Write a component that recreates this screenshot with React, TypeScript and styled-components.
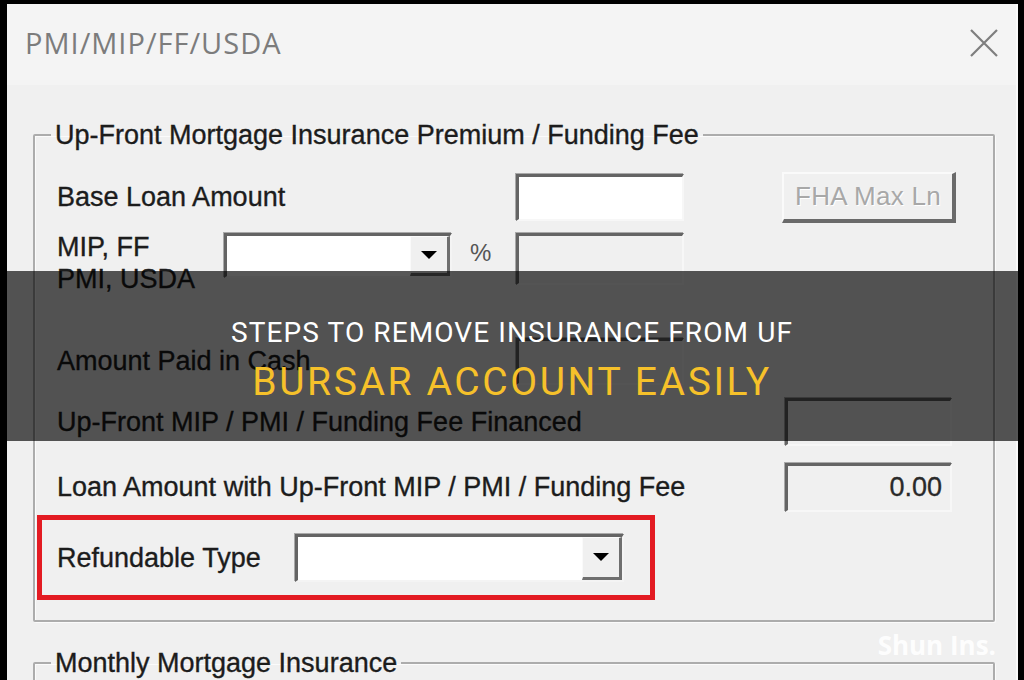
import React from "react";
import styled, { createGlobalStyle } from "styled-components";

const GlobalStyle = createGlobalStyle`
  html, body { margin: 0; padding: 0; background: #000; }
  #root { width: 1024px; height: 680px; }
  * { box-sizing: border-box; }
`;

const Screen = styled.div`
  position: relative;
  width: 1024px;
  height: 680px;
  overflow: hidden;
  background: #000;
  padding: 4px 6px 0 7px;
`;

const Dialog = styled.div`
  height: 100%;
  display: flex;
  flex-direction: column;
  background: #f0f0f0;
  border-right: 2px solid #fafafa;
  font-family: "Liberation Sans", Arial, sans-serif;
  color: #1c1c1c;
`;

const TitleBar = styled.div`
  flex: none;
  height: 81px;
  display: flex;
  align-items: center;
  justify-content: space-between;
  padding: 0 17px 4px 18px;
  background: #f4f4f4;
`;

const Title = styled.span`
  font-family: "Open Sans", "Noto Sans", sans-serif;
  font-size: 29px;
  color: #7c7c7c;
  letter-spacing: 1px;
`;

const Body = styled.div`
  flex: 1;
  display: flex;
  flex-direction: column;
  padding: 35px 21px 0 26px;
`;

const Group = styled.fieldset<{ $mt?: number; $h?: number }>`
  margin: ${(p) => p.$mt ?? 0}px 0 0 0;
  padding: 0;
  min-width: 0;
  flex: none;
  ${(p) => (p.$h ? `height: ${p.$h}px;` : "")}
  border: 2px solid #acacac;
  border-radius: 2px;
  box-shadow: inset 1px 1px 0 #fbfbfb, 1px 1px 0 #fbfbfb;
`;

const Legend = styled.legend`
  margin-left: 16px;
  padding: 0 4px;
  font-size: 27px;
  line-height: 30px;
  letter-spacing: 0;
  color: #1c1c1c;
  -webkit-text-stroke: 0.35px #1c1c1c;
`;

const GroupContent = styled.div`
  display: flex;
  flex-direction: column;
  padding: 20px 0 20px 22px;
`;

const Row = styled.div<{ $h: number; $mt?: number; $align?: string }>`
  display: flex;
  align-items: ${(p) => p.$align ?? "center"};
  height: ${(p) => p.$h}px;
  margin-top: ${(p) => p.$mt ?? 0}px;
`;

const Label = styled.span<{ $w: number; $mt?: number }>`
  flex: none;
  width: ${(p) => p.$w}px;
  margin-top: ${(p) => p.$mt ?? 0}px;
  font-size: 27px;
  line-height: 32px;
  letter-spacing: 0;
  white-space: nowrap;
  -webkit-text-stroke: 0.35px #1c1c1c;
`;

const Field = styled.div<{ $w: number; $h: number; $disabled?: boolean; $mt?: number; $ml?: number }>`
  flex: none;
  width: ${(p) => p.$w}px;
  height: ${(p) => p.$h}px;
  margin-top: ${(p) => p.$mt ?? 0}px;
  margin-left: ${(p) => p.$ml ?? 0}px;
  display: flex;
  align-items: center;
  justify-content: flex-end;
  padding-right: 8px;
  background: ${(p) => (p.$disabled ? "#f0f0f0" : "#ffffff")};
  border-top: 3px solid #646464;
  border-left: 3px solid #646464;
  border-right: 2px solid #f7f7f7;
  border-bottom: 2px solid #f7f7f7;
  box-shadow: -1px -1px 0 #a9a9a9;
  font-size: 27px;
  color: #2a2a2a;
  -webkit-text-stroke: 0.3px #2a2a2a;
`;

const Combo = styled.div<{ $w: number; $h: number; $mt?: number }>`
  flex: none;
  width: ${(p) => p.$w}px;
  height: ${(p) => p.$h}px;
  margin-top: ${(p) => p.$mt ?? 0}px;
  display: flex;
  justify-content: flex-end;
  background: #ffffff;
  border-top: 3px solid #646464;
  border-left: 3px solid #646464;
  border-right: 2px solid #f4f4f4;
  border-bottom: 2px solid #f4f4f4;
  box-shadow: -1px -1px 0 #a9a9a9;
`;

const DropButton = styled.div`
  width: 40px;
  height: 100%;
  display: flex;
  align-items: center;
  justify-content: center;
  background: #f0f0f0;
  border-right: 3px solid #6f6f6f;
  border-bottom: 3px solid #6f6f6f;
  border-top: 1px solid #fafafa;
  border-left: 1px solid #fafafa;
`;

const Percent = styled.span`
  flex: none;
  width: 64px;
  padding-left: 18px;
  margin-top: 9px;
  font-size: 24px;
  color: #555;
`;

const Button = styled.div`
  flex: none;
  width: 174px;
  height: 51px;
  margin-left: 98px;
  display: flex;
  align-items: center;
  justify-content: center;
  background: #f0f0f0;
  border-top: 2px solid #fafafa;
  border-left: 2px solid #fafafa;
  border-right: 4px solid #6a6a6a;
  border-bottom: 4px solid #6a6a6a;
  font-size: 26px;
  letter-spacing: 0.3px;
  color: #a8a8a8;
  text-shadow: 1px 1px 0 #ffffff;
`;

const RedBox = styled.div`
  flex: none;
  width: 618px;
  height: 85px;
  margin: 2px 0 0 -20px;
  display: flex;
  align-items: center;
  padding-left: 15px;
  border: 5px solid #e31b22;
`;

const Overlay = styled.div`
  position: absolute;
  left: 0;
  right: 0;
  top: 271px;
  height: 170px;
  display: flex;
  flex-direction: column;
  align-items: center;
  padding-top: 43px;
  gap: 6px;
  background: rgba(0, 0, 0, 0.66);
  font-family: Roboto, "Liberation Sans", sans-serif;
  text-align: center;
`;

const HeadLine = styled.span<{ $accent?: boolean }>`
  font-size: ${(p) => (p.$accent ? 39 : 28)}px;
  line-height: ${(p) => (p.$accent ? 48 : 38)}px;
  letter-spacing: ${(p) => (p.$accent ? 2.6 : 1.1)}px;
  color: ${(p) => (p.$accent ? "#f6c12a" : "#ffffff")};
  white-space: nowrap;
`;

const Watermark = styled.span`
  position: absolute;
  right: 28px;
  top: 627px;
  font-family: "Open Sans", "Noto Sans", sans-serif;
  font-weight: 700;
  font-size: 26px;
  color: rgba(255, 255, 255, 0.92);
`;

const CloseIcon = () => (
  <svg width="30" height="30" viewBox="0 0 30 30">
    <path d="M2 2 L28 28 M28 2 L2 28" stroke="#7e7e7e" strokeWidth="2.2" fill="none" />
  </svg>
);

const Arrow = () => (
  <svg width="18" height="10" viewBox="0 0 18 10">
    <path d="M1 1 L17 1 L9 9 Z" fill="#000" />
  </svg>
);

export default function App() {
  return (
    <>
      <GlobalStyle />
      <Screen>
        <Dialog>
          <TitleBar>
            <Title>PMI/MIP/FF/USDA</Title>
            <CloseIcon />
          </TitleBar>
          <Body>
            <Group>
              <Legend>Up-Front Mortgage Insurance Premium / Funding Fee</Legend>
              <GroupContent>
                <Row $h={54}>
                  <Label $w={459}>Base Loan Amount</Label>
                  <Field $w={168} $h={47} />
                  <Button>FHA Max Ln</Button>
                </Row>
                <Row $h={64} $mt={6} $align="flex-start">
                  <Label $w={167} $mt={1}>
                    MIP, FF
                    <br />
                    PMI, USDA
                  </Label>
                  <Combo $w={228} $h={45} $mt={3}>
                    <DropButton>
                      <Arrow />
                    </DropButton>
                  </Combo>
                  <Percent>%</Percent>
                  <Field $w={168} $h={52} $mt={3} $disabled />
                </Row>
                <Row $h={52} $mt={41}>
                  <Label $w={459}>Amount Paid in Cash</Label>
                  <Field $w={168} $h={47} $disabled />
                </Row>
                <Row $h={52} $mt={9}>
                  <Label $w={728}>Up-Front MIP / PMI / Funding Fee Financed</Label>
                  <Field $w={167} $h={48} $disabled />
                </Row>
                <Row $h={52} $mt={13}>
                  <Label $w={728}>Loan Amount with Up-Front MIP / PMI / Funding Fee</Label>
                  <Field $w={167} $h={49} $disabled>0.00</Field>
                </Row>
                <RedBox>
                  <Label $w={238}>Refundable Type</Label>
                  <Combo $w={329} $h={48}>
                    <DropButton>
                      <Arrow />
                    </DropButton>
                  </Combo>
                </RedBox>
              </GroupContent>
            </Group>
            <Group $mt={26} $h={120}>
              <Legend>Monthly Mortgage Insurance</Legend>
            </Group>
          </Body>
        </Dialog>
        <Overlay>
          <HeadLine>STEPS TO REMOVE INSURANCE FROM UF</HeadLine>
          <HeadLine $accent>BURSAR ACCOUNT EASILY</HeadLine>
        </Overlay>
        <Watermark>Shun Ins.</Watermark>
      </Screen>
    </>
  );
}
